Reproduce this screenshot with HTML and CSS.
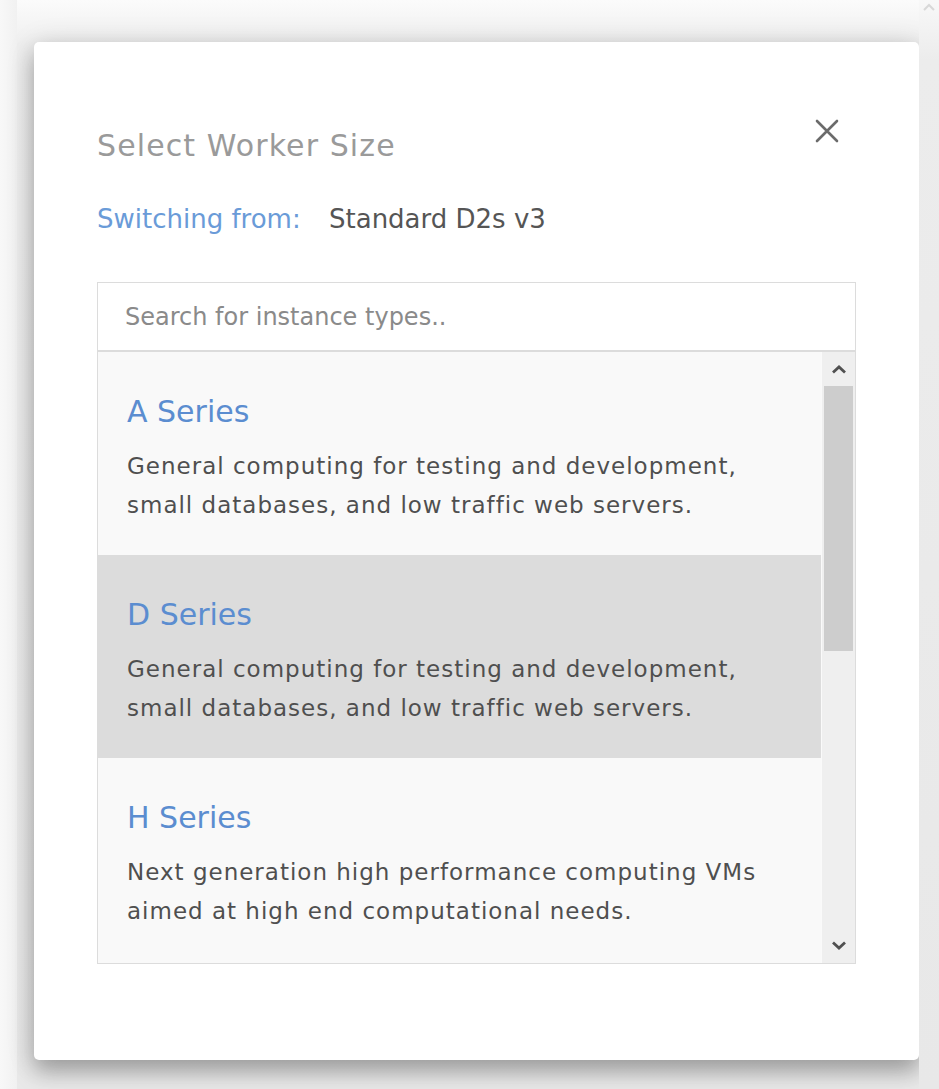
FILE: index.html
```html
<!DOCTYPE html>
<html>
<head>
<meta charset="utf-8">
<link rel="stylesheet" href="styles.css">
</head>
<body>
<div class="page">
  <div class="left-strip"></div>
  <div class="stage">
    <div class="modal">
      <div class="modal-head">
        <h1 class="title">Select Worker Size</h1>
        <button class="close" aria-label="Close">
          <svg width="24" height="24" viewBox="0 0 24 24"><path d="M2 2 L22 22 M22 2 L2 22" stroke="#6b6b6b" stroke-width="2.6" stroke-linecap="round" fill="none"/></svg>
        </button>
      </div>
      <div class="switching"><span class="sw-label">Switching from:</span><span class="sw-value">Standard D2s v3</span></div>
      <div class="picker">
        <input class="search" type="text" placeholder="Search for instance types..">
        <div class="list">
          <div class="items">
            <div class="item">
              <div class="item-title">A Series</div>
              <div class="item-desc">General computing for testing and development,<br>small databases, and low traffic web servers.</div>
            </div>
            <div class="item selected">
              <div class="item-title">D Series</div>
              <div class="item-desc">General computing for testing and development,<br>small databases, and low traffic web servers.</div>
            </div>
            <div class="item">
              <div class="item-title">H Series</div>
              <div class="item-desc">Next generation high performance computing VMs<br>aimed at high end computational needs.</div>
            </div>
          </div>
          <div class="scrollbar">
            <svg class="arrow" width="16" height="10" viewBox="0 0 16 10"><path d="M2 8.5 L8 3 L14 8.5" stroke="#505050" stroke-width="2.8" fill="none"/></svg>
            <div class="track"><div class="thumb"></div></div>
            <svg class="arrow" width="16" height="10" viewBox="0 0 16 10"><path d="M2 1.5 L8 7 L14 1.5" stroke="#505050" stroke-width="2.8" fill="none"/></svg>
          </div>
        </div>
      </div>
    </div>
  </div>
  <div class="page-scroll">
    <svg width="14" height="10" viewBox="0 0 14 10"><path d="M2 8 L7 3 L12 8" stroke="#d8d8d8" stroke-width="2" fill="none"/></svg>
  </div>
</div>
</body>
</html>
```

FILE: styles.css
```css
html, body {
  margin: 0;
  padding: 0;
  height: 100%;
}
body {
  background: #ececec;
  font-family: "DejaVu Sans", "Open Sans", sans-serif;
  overflow: hidden;
}
.page {
  display: flex;
  height: 1089px;
}
.left-strip {
  width: 17px;
  background: linear-gradient(to right, #f8f8f8, #f1f1f1);
  flex: none;
}
.stage {
  flex: 1;
  padding: 42px 0 0 17px;
  background: linear-gradient(to bottom, #fbfbfb 0, #efefef 45px, #e9e9e9 100%);
}
.page-scroll {
  width: 20px;
  flex: none;
  background: linear-gradient(to bottom, #f8f8f8 0, #ececec 60px, #e8e8e8 100%);
  display: flex;
  justify-content: center;
  padding-top: 2px;
  align-items: flex-start;
}
.modal {
  width: 885px;
  height: 1018px;
  box-sizing: border-box;
  background: #fff;
  border-radius: 5px;
  box-shadow: 0 12px 22px rgba(0,0,0,0.28), 0 2px 30px rgba(0,0,0,0.12);
  padding: 70px 63px 0 63px;
}
.modal-head {
  display: flex;
  justify-content: space-between;
  align-items: flex-start;
}
.title {
  margin: 14px 0 0 0;
  font-weight: 400;
  font-size: 30px;
  line-height: 40px;
  color: #9a9a9a;
  letter-spacing: 1.1px;
}
.close {
  border: 0;
  background: none;
  padding: 0;
  margin: 7px 17px 0 0;
  width: 24px;
  height: 24px;
  cursor: pointer;
}
.close svg { display: block; }
.switching {
  margin-top: 38px;
  font-size: 26px;
  line-height: 30px;
  display: flex;
}
.sw-label {
  color: #6a9bd8;
  width: 232px;
}
.sw-value {
  color: #555;
}
.picker {
  margin-top: 48px;
  border: 1px solid #dcdcdc;
}
.search {
  display: block;
  width: 100%;
  box-sizing: border-box;
  height: 69px;
  border: 0;
  border-bottom: 2px solid #dcdcdc;
  padding: 0 27px;
  font-family: inherit;
  font-size: 24px;
  color: #555;
  outline: none;
}
.search::placeholder {
  color: #8a8a8a;
}
.list {
  display: flex;
  height: 611px;
  overflow: hidden;
  background: #f9f9f9;
}
.items {
  flex: 1;
}
.item {
  padding: 40px 29px 30px 29px;
  background: #f9f9f9;
}
.item.selected {
  background: #dcdcdc;
}
.item-title {
  font-size: 30px;
  line-height: 40px;
  color: #5b8dd0;
  margin-bottom: 15px;
}
.item-desc {
  font-size: 23px;
  line-height: 39px;
  color: #4f4f4f;
  letter-spacing: 1px;
}
.scrollbar {
  width: 33px;
  flex: none;
  background: #efefef;
  border-left: 1px solid #fafafa;
  display: flex;
  flex-direction: column;
  align-items: center;
}
.arrow {
  display: block;
  margin: 12px 0;
}
.track {
  flex: 1;
  width: 100%;
  padding: 0 2px 0 2px;
  box-sizing: border-box;
}
.thumb {
  height: 265px;
  background: #cdcdcd;
}
```
